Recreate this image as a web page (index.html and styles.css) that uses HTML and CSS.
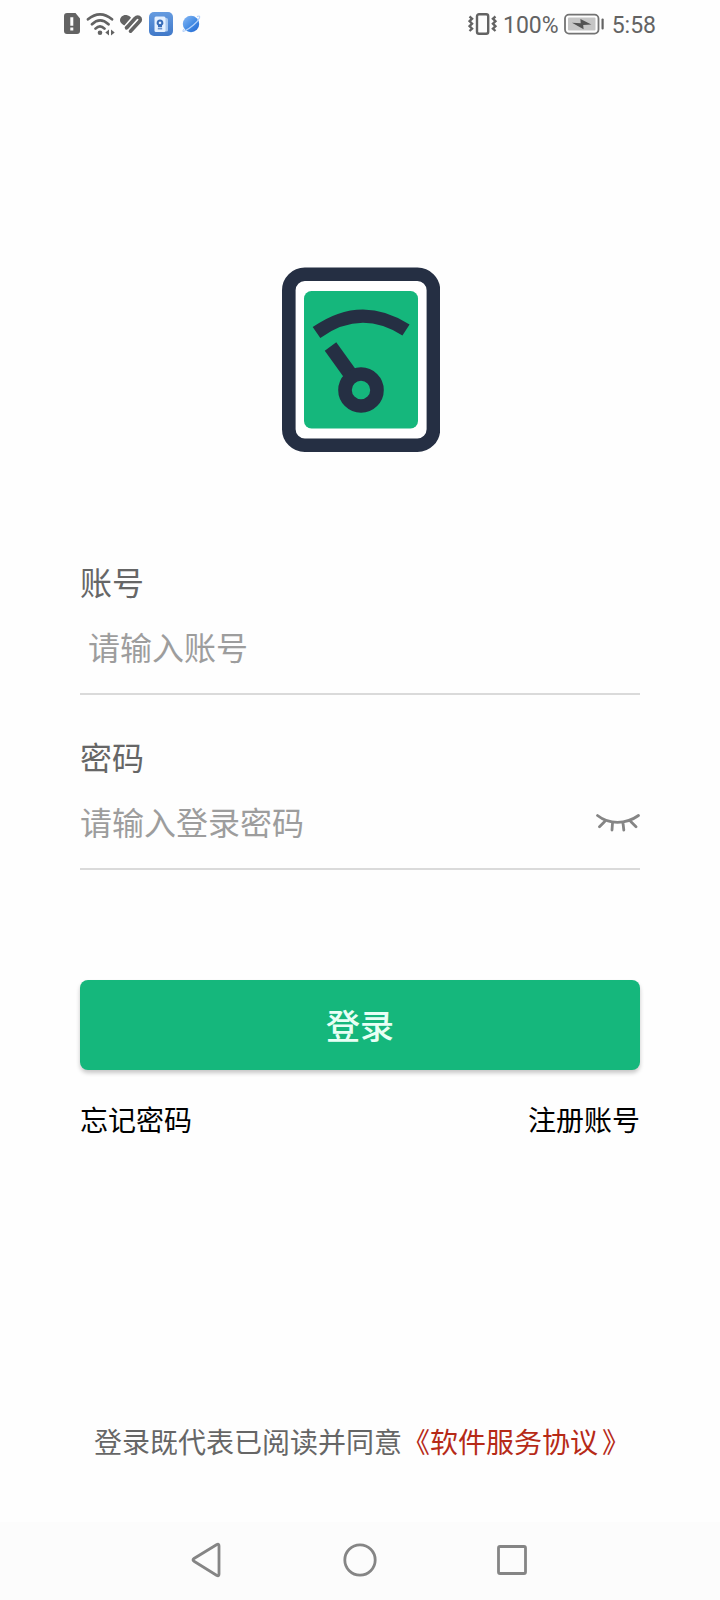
FILE: index.html
```
<!DOCTYPE html>
<html lang="zh-CN">
<head>
<meta charset="utf-8">
<title>登录</title>
<link rel="stylesheet" href="styles.css">
</head>
<body>
<div class="screen">
  <header class="status">
    <svg class="status-left" viewBox="60 8 145 32" width="145" height="32">
      <path fill="#636363" fill-rule="evenodd" d="M67 13h8.500L80 18.500V31a3 3 0 0 1-3 3H67a3 3 0 0 1-3-3V16a3 3 0 0 1 3-3ZM70.300 17.300v8.400h3v-8.400ZM70.300 27.600v2.900h3v-2.900Z"/>
      <g fill="none" stroke="#636363" stroke-width="2.700" stroke-linecap="round">
        <path d="M88 19.300Q100 9.500 112 19.300M92 24.300Q100 16.500 108.500 24.300M95.500 28.600Q100 24.200 104.500 28.600"/>
      </g>
      <circle cx="100" cy="32.800" r="2.300" fill="#636363"/>
      <path fill="#636363" d="M109 29.500v6l-3.700-3ZM111 29.500v6l3.700-3Z"/>
      <path fill="#636363" d="M120 20.500c0-3.500 3-6 6.500-5.500 2 .3 3.500 1.500 4.500 2.800L124.300 25.500C121.500 23.500 120 22.500 120 20.500Z"/>
      <path fill="none" stroke="#636363" stroke-width="3.600" stroke-linecap="round" stroke-linejoin="round" d="M127 27.500 135 18.500Q137 16.400 139 17.300C141 18.400 140.500 20.500 139 22L130.500 31.200M126.500 27.800l2-2.200"/>
      <path stroke="#fff" stroke-width="1" d="m128.500 29.500 7.500-8"/>
      <defs>
        <linearGradient id="tile" x2="0" y2="1"><stop stop-color="#659be0"/><stop offset="1" stop-color="#4078c8"/></linearGradient>
        <linearGradient id="globe" x2="1" y2="1"><stop stop-color="#8abaf5"/><stop offset=".6" stop-color="#3b86e2"/><stop offset="1" stop-color="#2866ce"/></linearGradient>
      </defs>
      <rect x="149" y="12" width="24" height="24" rx="5" fill="url(#tile)"/>
      <rect x="160" y="18" width="8" height="13.500" rx="1.500" fill="#a9c8ef"/>
      <rect x="154.500" y="16.500" width="11" height="15.500" rx="1.500" fill="#e4f0ff"/>
      <path fill="#386cb8" fill-rule="evenodd" d="M160 19.500a3.300 3.300 0 0 1 2 6v1.700h-4v-1.700a3.300 3.300 0 0 1 2-6ZM160 21.500a1.300 1.300 0 1 0 .01 0Z"/>
      <path stroke="#386cb8" stroke-width="1" d="M157.800 28.800h4.400"/>
      <circle cx="191" cy="24" r="8.200" fill="url(#globe)"/>
      <path fill="none" stroke="#b4d1fa" stroke-width="1.200" d="M197 16.600c5-2.400 2.600 3.200-3.500 8.400S180 34 184 29"/>
    </svg>
    <div class="status-right">
      <svg class="vibrate" viewBox="0 0 30 24" width="30" height="24">
        <rect x="9" y="2.300" width="11.200" height="19.500" rx="2" fill="none" stroke="#636363" stroke-width="2.400"/>
        <path fill="none" stroke="#636363" stroke-width="2.300" d="m1.500 4.500 2.600 2.200-2.600 2.500 2.600 2.500-2.600 2.500 2.600 2.500-2.600 2.300M27.500 4.500l-2.600 2.200 2.600 2.500-2.600 2.500 2.600 2.500-2.600 2.500 2.600 2.300"/>
      </svg>
      <span class="percent">100%</span>
      <svg class="battery" viewBox="0 0 40 24" width="40" height="24">
        <rect x="1" y="2.600" width="33.500" height="19" rx="4" fill="none" stroke="#737373" stroke-width="1.800"/>
        <rect x="4" y="5.600" width="27.500" height="13" rx="1" fill="#c5c5c5"/>
        <path fill="#525252" d="m8 10.800 8.700.5-.3-4.300 11 5.500-8.200.6.400 4.200Z"/>
        <rect x="37.500" y="6.500" width="2.200" height="11" rx="1" fill="#636363"/>
      </svg>
      <span class="time">5:58</span>
    </div>
  </header>

  <main class="content">
    <svg class="logo" viewBox="0 0 158 185" width="158" height="185">
      <rect x="6.800" y="7.300" width="144.600" height="170.900" rx="16" fill="#fff" stroke="#252f43" stroke-width="13.600"/>
      <rect x="22" y="24" width="114" height="137.500" rx="7.500" fill="#15b77c"/>
      <path fill="none" stroke="#252f43" stroke-width="13.200" d="M34.500 65.500Q79 34 124 63"/>
      <path stroke="#252f43" stroke-width="14.200" d="m48.500 79.500 23 32"/>
      <circle cx="79" cy="123" r="16" fill="#15b77c" stroke="#252f43" stroke-width="13.600"/>
    </svg>

    <form class="form">
      <section class="field">
        <div class="label">账号</div>
        <div class="entry entry-account">请输入账号</div>
      </section>
      <section class="field">
        <div class="label">密码</div>
        <div class="entry">
          <span>请输入登录密码</span>
          <svg class="eye" viewBox="0 0 46 20" width="46" height="20" fill="none" stroke="#858585" stroke-width="2.800" stroke-linecap="round">
            <path d="M3.500 3.500Q12 10.300 23.500 10.300T44.500 3.500M10.500 9.800l-5 5M18.500 11l-.5 7M29 11l.8 7M37 9.800l5 5"/>
          </svg>
        </div>
      </section>
      <button class="submit" type="button">登录</button>
      <div class="links"><span>忘记密码</span><span>注册账号</span></div>
    </form>
    <p class="agreement">登录既代表已阅读并同意<span class="terms">《软件服务协议<span class="bracket-end">》</span></span></p>
  </main>

  <nav class="navbar">
    <svg viewBox="0 0 36 36" width="36" height="36"><path d="M26.500 4.500Q29 3 29 5.500v28.500Q29 36.500 26.500 35L4 21Q2 19.700 4 18.300Z" transform="translate(0 -1.800)"/></svg>
    <svg viewBox="0 0 36 36" width="36" height="36"><circle cx="18" cy="18" r="15.200"/></svg>
    <svg viewBox="0 0 36 36" width="36" height="36"><rect x="4.500" y="4.500" width="27" height="27" rx="1.500"/></svg>
  </nav>
</div>
</body>
</html>
```
FILE: styles.css
```
* { box-sizing: border-box; }

body {
  margin: 0;
  background: #fefefe;
  font-family: Roboto, "Noto Sans CJK SC", sans-serif;
}

.screen {
  display: flex;
  flex-direction: column;
  width: 720px;
  height: 1600px;
}

.status {
  display: flex;
  justify-content: space-between;
  height: 48px;
  padding: 8px 64px 8px 60px;
  color: #636363;
  font-size: 23px;
}

.status-right {
  display: flex;
  align-items: center;
  height: 32px;
}

.percent { margin-left: 5px; line-height: 32px; padding-top: 3px; }
.battery { margin-left: 5px; }
.time { margin-left: 8px; line-height: 32px; padding-top: 3px; }

.content {
  display: flex;
  flex: 1;
  flex-direction: column;
  padding: 219px 80px 0;
}

.logo { align-self: center; margin-left: 2px; }

.form {
  display: flex;
  flex-direction: column;
  margin-top: 106px;
}

.field {
  height: 137px;
  margin-bottom: 38px;
  padding-top: 1px;
  border-bottom: 2px solid #dadada;
}

.label {
  height: 50px;
  color: #666;
  font-size: 32px;
  line-height: 50px;
}

.entry {
  display: flex;
  justify-content: space-between;
  height: 50px;
  margin-top: 15px;
  color: #9d9d9d;
  font-size: 32px;
  line-height: 50px;
}

.entry-account { padding-left: 8px; }
.eye { margin-top: 13px; }

.submit {
  height: 90px;
  margin-top: 72px;
  padding: 4px 0 0;
  border: 0;
  border-radius: 8px;
  background: #15b77c;
  box-shadow: 0 3px 4px rgba(0, 0, 0, .22);
  color: #e8fff5;
  font: 500 34px/86px Roboto, "Noto Sans CJK SC", sans-serif;
}

.links {
  display: flex;
  justify-content: space-between;
  margin-top: 30px;
  color: #000;
  font-size: 28px;
  line-height: 44px;
}

.agreement {
  margin: 278px -20px 0 14px;
  color: #666;
  font-size: 28px;
  line-height: 44px;
  white-space: nowrap;
}

.terms { color: #b62a17; }
.bracket-end { margin-left: 4px; }

.navbar {
  display: flex;
  justify-content: center;
  gap: 116px;
  height: 78px;
  padding-top: 20px;
  background: #fcfcfc;
}

.navbar svg {
  fill: none;
  stroke: #858585;
  stroke-width: 2.8;
}
```
